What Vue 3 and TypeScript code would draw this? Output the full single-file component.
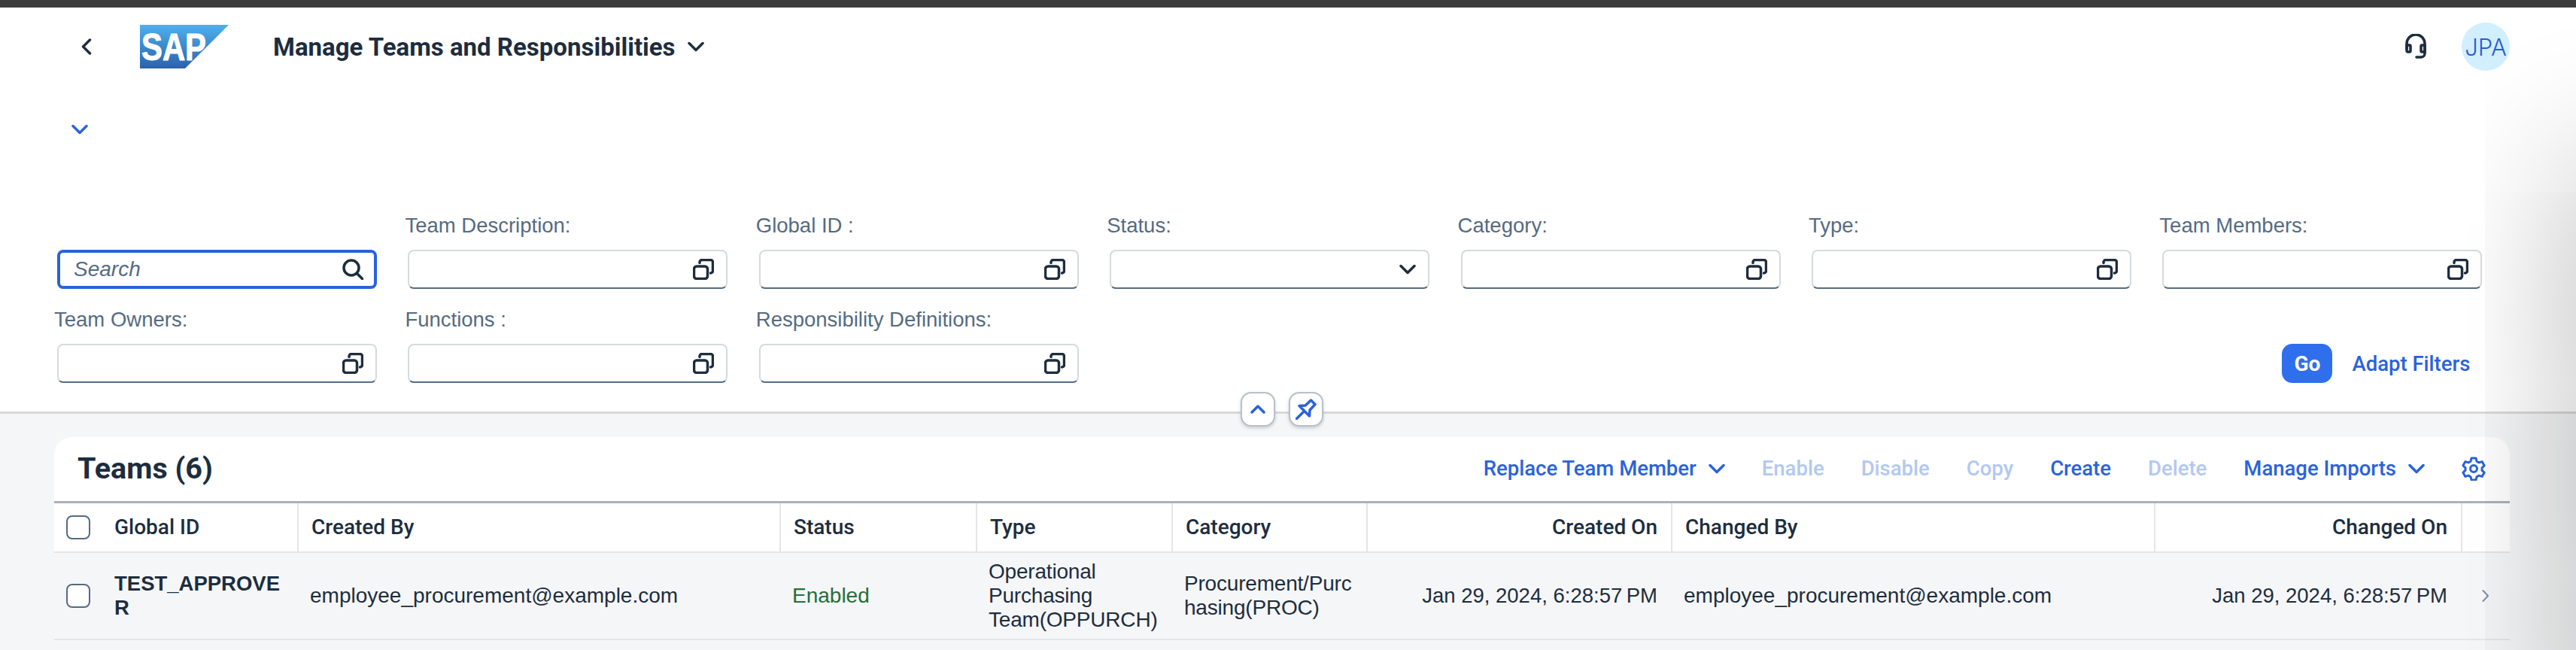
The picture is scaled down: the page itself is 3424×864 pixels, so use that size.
<template>
  <div class="page">
    <div class="top-strip"></div>

    <header class="shell">
      <svg class="shell__back" width="14" height="22" viewBox="0 0 14 22">
        <path d="M11.5 2 L2.5 11 L11.5 20" />
      </svg>
      <svg class="shell__logo" width="118" height="58" viewBox="0 0 118 58">
        <defs>
          <linearGradient id="sapBlue" x1="0" y1="0" x2="0" y2="1">
            <stop offset="0" stop-color="#4fb0ec" />
            <stop offset="1" stop-color="#2a62ab" />
          </linearGradient>
        </defs>
        <polygon points="0,0 118,0 60,58 0,58" fill="url(#sapBlue)" />
        <text
          x="2"
          y="47"
          textLength="86"
          lengthAdjust="spacingAndGlyphs"
          class="shell__logo-text"
        >SAP</text>
      </svg>
      <button type="button" class="shell__title">
        Manage Teams and Responsibilities
        <svg width="22" height="14" viewBox="0 0 22 14">
          <path d="M2 2.5 L11 11.5 L20 2.5" />
        </svg>
      </button>
      <svg class="shell__headset" width="30" height="34" viewBox="0 0 30 34">
        <path d="M3 20 V13 a12 12 0 0 1 24 0 V24" />
        <path d="M3 15 h3.5 a1.5 1.5 0 0 1 1.5 1.5 v6 a1.5 1.5 0 0 1 -1.5 1.5 H5 a2 2 0 0 1 -2 -2 z" />
        <path d="M27 15 h-3.5 a1.5 1.5 0 0 0 -1.5 1.5 v6 a1.5 1.5 0 0 0 1.5 1.5 H27 z" />
        <path d="M27 24 v2 a5 5 0 0 1 -5 5 h-6" />
      </svg>
      <div class="shell__avatar">JPA</div>
    </header>

    <div class="expand">
      <svg width="22" height="14" viewBox="0 0 22 14">
        <path d="M2 2.5 L11 11.5 L20 2.5" />
      </svg>
    </div>

    <section class="filters">
      <div class="filter filter--search">
        <div class="input input--focused">
          <span class="input__placeholder">Search</span>
          <svg width="28" height="28" viewBox="0 0 28 28" class="input__icon">
            <circle cx="12" cy="12" r="10" />
            <path d="M19.5 19.5 L27 27" />
          </svg>
        </div>
      </div>

      <div v-for="f in filters" :key="f.label" class="filter">
        <label class="filter__label">{{ f.label }}</label>
        <div class="input">
          <svg v-if="f.select" width="22" height="14" viewBox="0 0 22 14" class="input__icon">
            <path d="M2 2.5 L11 11.5 L20 2.5" />
          </svg>
          <svg v-else width="28" height="28" viewBox="0 0 28 28" class="input__icon">
            <rect x="1.5" y="10" width="18" height="16.5" rx="3.5" />
            <path d="M9 5.5 V4.5 a3 3 0 0 1 3 -3 H23.5 a3 3 0 0 1 3 3 V16 a3 3 0 0 1 -3 3" />
          </svg>
        </div>
      </div>

      <div class="filters__actions">
        <button type="button" class="btn-go">Go</button>
        <button type="button" class="link">Adapt Filters</button>
      </div>

      <div class="collapse-btns">
        <button type="button" class="round-btn">
          <svg width="20" height="12" viewBox="0 0 20 12">
            <path d="M2 10 L10 2 L18 10" />
          </svg>
        </button>
        <button type="button" class="round-btn">
          <svg width="28" height="28" viewBox="0 0 28 28">
            <path d="M1.5 26.5 L11 17 M5 9.5 L13 9 L20.5 2 L26 7.5 L19 15 L18.5 23 Z" />
          </svg>
        </button>
      </div>
    </section>

    <main class="content">
      <section class="card">
        <div class="toolbar">
          <h2 class="toolbar__title">Teams (6)</h2>
          <div class="toolbar__actions">
            <button
              v-for="a in actions"
              :key="a.label"
              type="button"
              class="link"
              :class="{ 'link--disabled': a.disabled }"
            >
              {{ a.label }}
              <svg v-if="a.menu" width="22" height="14" viewBox="0 0 22 14">
                <path d="M2 2.5 L11 11.5 L20 2.5" />
              </svg>
            </button>
            <svg class="toolbar__gear" width="32" height="32" viewBox="0 0 32 32">
              <circle cx="16" cy="16" r="4.5" />
              <path d="M13 2 h6 l1 4.2 3 1.7 4.1 -1.3 3 5.2 -3.1 3 v3.4 l3.1 3 -3 5.2 -4.1 -1.3 -3 1.7 -1 4.2 h-6 l-1 -4.2 -3 -1.7 -4.1 1.3 -3 -5.2 3.1 -3 v-3.4 l-3.1 -3 3 -5.2 4.1 1.3 3 -1.7 z" />
            </svg>
          </div>
        </div>

        <div class="table-row table-row--head">
          <div class="cell cell--select">
            <span class="checkbox"></span>
            <span>Global ID</span>
          </div>
          <div
            v-for="c in columns"
            :key="c.label"
            class="cell"
            :class="{ 'cell--end': c.end }"
          >
            {{ c.label }}
          </div>
          <div class="cell"></div>
        </div>

        <div v-for="(r, i) in rows" :key="i" class="table-row" :class="{ 'table-row--next': i > 0 }">
          <div class="cell cell--select">
            <span class="checkbox"></span>
            <strong class="cell__id">{{ r.id }}</strong>
          </div>
          <div class="cell">{{ r.createdBy }}</div>
          <div class="cell cell--ok">{{ r.status }}</div>
          <div class="cell cell--wrap">{{ r.type }}</div>
          <div class="cell cell--wrap">{{ r.category }}</div>
          <div class="cell cell--end cell--date">{{ r.createdOn }}</div>
          <div class="cell">{{ r.changedBy }}</div>
          <div class="cell cell--end cell--date">{{ r.changedOn }}</div>
          <div class="cell cell--nav">
            <svg width="10" height="18" viewBox="0 0 10 18">
              <path d="M1.5 2 L8 9 L1.5 16" />
            </svg>
          </div>
        </div>
      </section>
    </main>

    <div class="side-shadow"></div>
  </div>
</template>

<script setup lang="ts">
interface FilterField {
  label: string;
  select?: boolean;
}

interface ToolbarAction {
  label: string;
  disabled?: boolean;
  menu?: boolean;
}

interface TeamRow {
  id: string;
  createdBy: string;
  status: string;
  type: string;
  category: string;
  createdOn: string;
  changedBy: string;
  changedOn: string;
}

const filters: FilterField[] = [
  { label: "Team Description:" },
  { label: "Global ID :" },
  { label: "Status:", select: true },
  { label: "Category:" },
  { label: "Type:" },
  { label: "Team Members:" },
  { label: "Team Owners:" },
  { label: "Functions :" },
  { label: "Responsibility Definitions:" },
];

const actions: ToolbarAction[] = [
  { label: "Replace Team Member", menu: true },
  { label: "Enable", disabled: true },
  { label: "Disable", disabled: true },
  { label: "Copy", disabled: true },
  { label: "Create" },
  { label: "Delete", disabled: true },
  { label: "Manage Imports", menu: true },
];

const columns = [
  { label: "Created By" },
  { label: "Status" },
  { label: "Type" },
  { label: "Category" },
  { label: "Created On", end: true },
  { label: "Changed By" },
  { label: "Changed On", end: true },
];

const rows: TeamRow[] = [
  {
    id: "TEST_APPROVER",
    createdBy: "employee_procurement@example.com",
    status: "Enabled",
    type: "Operational Purchasing Team(OPPURCH)",
    category: "Procurement/Purchasing(PROC)",
    createdOn: "Jan 29, 2024, 6:28:57\u202fPM",
    changedBy: "employee_procurement@example.com",
    changedOn: "Jan 29, 2024, 6:28:57\u202fPM",
  },
  {
    id: "",
    createdBy: "",
    status: "",
    type: "Operational Purchasing Team(OPPURCH)",
    category: "",
    createdOn: "",
    changedBy: "",
    changedOn: "",
  },
];
</script>

<style>
html,
body {
  margin: 0;
  background: #f5f6f7;
}
</style>

<style scoped>
.page {
  position: relative;
  width: 3424px;
  height: 864px;
  overflow: hidden;
  background: #f5f6f7;
  color: #1d2d3e;
  font-family: "Liberation Sans", Arial, sans-serif;
  font-size: 28px;
}

svg {
  fill: none;
  stroke: currentColor;
  stroke-width: 3.5;
  stroke-linecap: round;
  stroke-linejoin: round;
  flex: none;
}

button {
  border: none;
  background: none;
  padding: 0;
  font: inherit;
}

.top-strip {
  height: 10px;
  background: #3d3d3d;
}

/* Shell */
.shell {
  display: flex;
  align-items: center;
  height: 104px;
  padding: 0 88px 0 108px;
  background: #fff;
}

.shell__back {
  margin-right: 64px;
}

.shell__logo {
  margin-right: 59px;
  stroke: none;
}

.shell__logo-text {
  fill: #fff;
  stroke: #fff;
  stroke-width: 1;
  font-family: "Liberation Sans", Arial, sans-serif;
  font-size: 50px;
  font-weight: 700;
}

.shell__title {
  display: flex;
  align-items: center;
  gap: 16px;
  font-family: Roboto, sans-serif;
  font-size: 33px;
  font-weight: 700;
  color: #1d2d3e;
  margin-right: auto;
}

.shell__headset {
  margin-right: 46px;
}

.shell__avatar {
  display: flex;
  align-items: center;
  justify-content: center;
  width: 64px;
  height: 64px;
  border-radius: 50%;
  background: #d1efff;
  color: #2a5bd7;
  font-family: Inter, sans-serif;
  font-size: 31px;
  font-weight: 300;
}

.expand {
  display: flex;
  align-items: center;
  height: 116px;
  padding-left: 95px;
  background: #fff;
  color: #2a62dc;
}

/* Filter bar */
.filters {
  position: relative;
  display: grid;
  grid-template-columns: repeat(7, 433px);
  column-gap: 33.4px;
  row-gap: 25px;
  padding: 54px 0 38px 72px;
  background: #fff;
  border-bottom: 3px solid #d9d9d9;
}

.filter {
  display: flex;
  flex-direction: column;
  justify-content: flex-end;
}

.filter__label {
  line-height: 32px;
  margin-bottom: 16px;
  color: #556b82;
  font-size: 27.5px;
  white-space: nowrap;
}

.input {
  display: flex;
  align-items: center;
  justify-content: flex-end;
  box-sizing: border-box;
  height: 52px;
  margin: 0 4px;
  padding: 0 16px 0 18px;
  background: #fff;
  border: 2px solid #d5dadd;
  border-bottom-color: #556b82;
  border-radius: 8px;
}

.input--focused {
  justify-content: space-between;
  border: 4px solid #2a62dc;
  padding: 0 14px 0 18px;
}

.input__placeholder {
  font-style: italic;
  color: #556b82;
}

.filters__actions {
  grid-column: 6 / 8;
  display: flex;
  align-items: center;
  justify-content: flex-end;
  gap: 26px;
  align-self: end;
  height: 52px;
  padding-right: 20px;
}

.btn-go {
  width: 67px;
  height: 52px;
  border-radius: 14px;
  background: #2f6fed;
  color: #fff;
  font-family: Roboto, sans-serif;
  font-weight: 700;
}

.link {
  display: inline-flex;
  align-items: center;
  gap: 16px;
  color: #2a62dc;
  font-family: Roboto, sans-serif;
  font-size: 27.5px;
  font-weight: 500;
  white-space: nowrap;
}

.link--disabled {
  color: #b2c8f2;
}

.collapse-btns {
  position: absolute;
  left: 1649px;
  bottom: -20px;
  display: flex;
  gap: 18px;
}

.round-btn {
  display: flex;
  align-items: center;
  justify-content: center;
  box-sizing: border-box;
  width: 46px;
  height: 46px;
  border: 2px solid #b8c0c9;
  border-radius: 14px;
  background: #fff;
  color: #2a62dc;
  box-shadow: 0 2px 4px rgba(85, 107, 130, 0.3);
}

/* Table card */
.content {
  padding: 31px 88px 0 72px;
}

.card {
  border-radius: 24px 24px 0 0;
  background: #fff;
}

.toolbar {
  display: flex;
  align-items: center;
  justify-content: space-between;
  box-sizing: border-box;
  height: 88px;
  padding: 0 32px 2px 31px;
  border-bottom: 3px solid #a8b2bd;
}

.toolbar__title {
  margin: 0;
  font-family: Roboto, sans-serif;
  font-size: 39.5px;
  font-weight: 700;
}

.toolbar__actions {
  display: flex;
  align-items: center;
  gap: 49px;
}

.toolbar__gear {
  color: #2a62dc;
  stroke-width: 3;
}

.table-row {
  display: grid;
  grid-template-columns: 323px 641px 261px 260px 259px 405px 642px 408px 65px;
  min-height: 116px;
  box-sizing: border-box;
  background: #f5f6f7;
  border-bottom: 2px solid #e5e5e5;
}

.table-row--head {
  min-height: 66px;
  background: #fff;
  border-bottom-width: 2px;
  font-family: Roboto, sans-serif;
  font-weight: 500;
}

.table-row--head .cell + .cell {
  border-left: 2px solid #e5e5e5;
}

/* next row only peeks in at the bottom of the page */
.table-row--next .cell--wrap {
  align-items: flex-start;
  padding-top: 8px;
}

.cell {
  display: flex;
  align-items: center;
  box-sizing: border-box;
  padding: 0 16px 0 17px;
  line-height: 32px;
  min-width: 0;
  overflow-wrap: anywhere;
}

.cell--select {
  gap: 32px;
  padding-left: 16px;
}

.cell--end {
  justify-content: flex-end;
  padding-right: 18px;
}

.cell--date {
  font-size: 27.5px;
}

.cell--wrap {
  padding-right: 10px;
  letter-spacing: -0.2px;
}

.cell--ok {
  color: #256f3a;
}

.cell--nav {
  justify-content: center;
  color: #788fa6;
}

.cell--nav svg {
  stroke-width: 2;
}

.cell__id {
  font-weight: 700;
  font-size: 27.5px;
}

.checkbox {
  flex: none;
  box-sizing: border-box;
  width: 32px;
  height: 32px;
  background: #fff;
  border: 2px solid #556b82;
  border-radius: 8px;
}

/* Soft shadow bleeding in from the right edge */
.side-shadow {
  position: absolute;
  top: 210px;
  right: -120px;
  width: 120px;
  height: 1200px;
  box-shadow: 0 0 190px rgba(0, 0, 0, 0.32);
  pointer-events: none;
}
</style>
